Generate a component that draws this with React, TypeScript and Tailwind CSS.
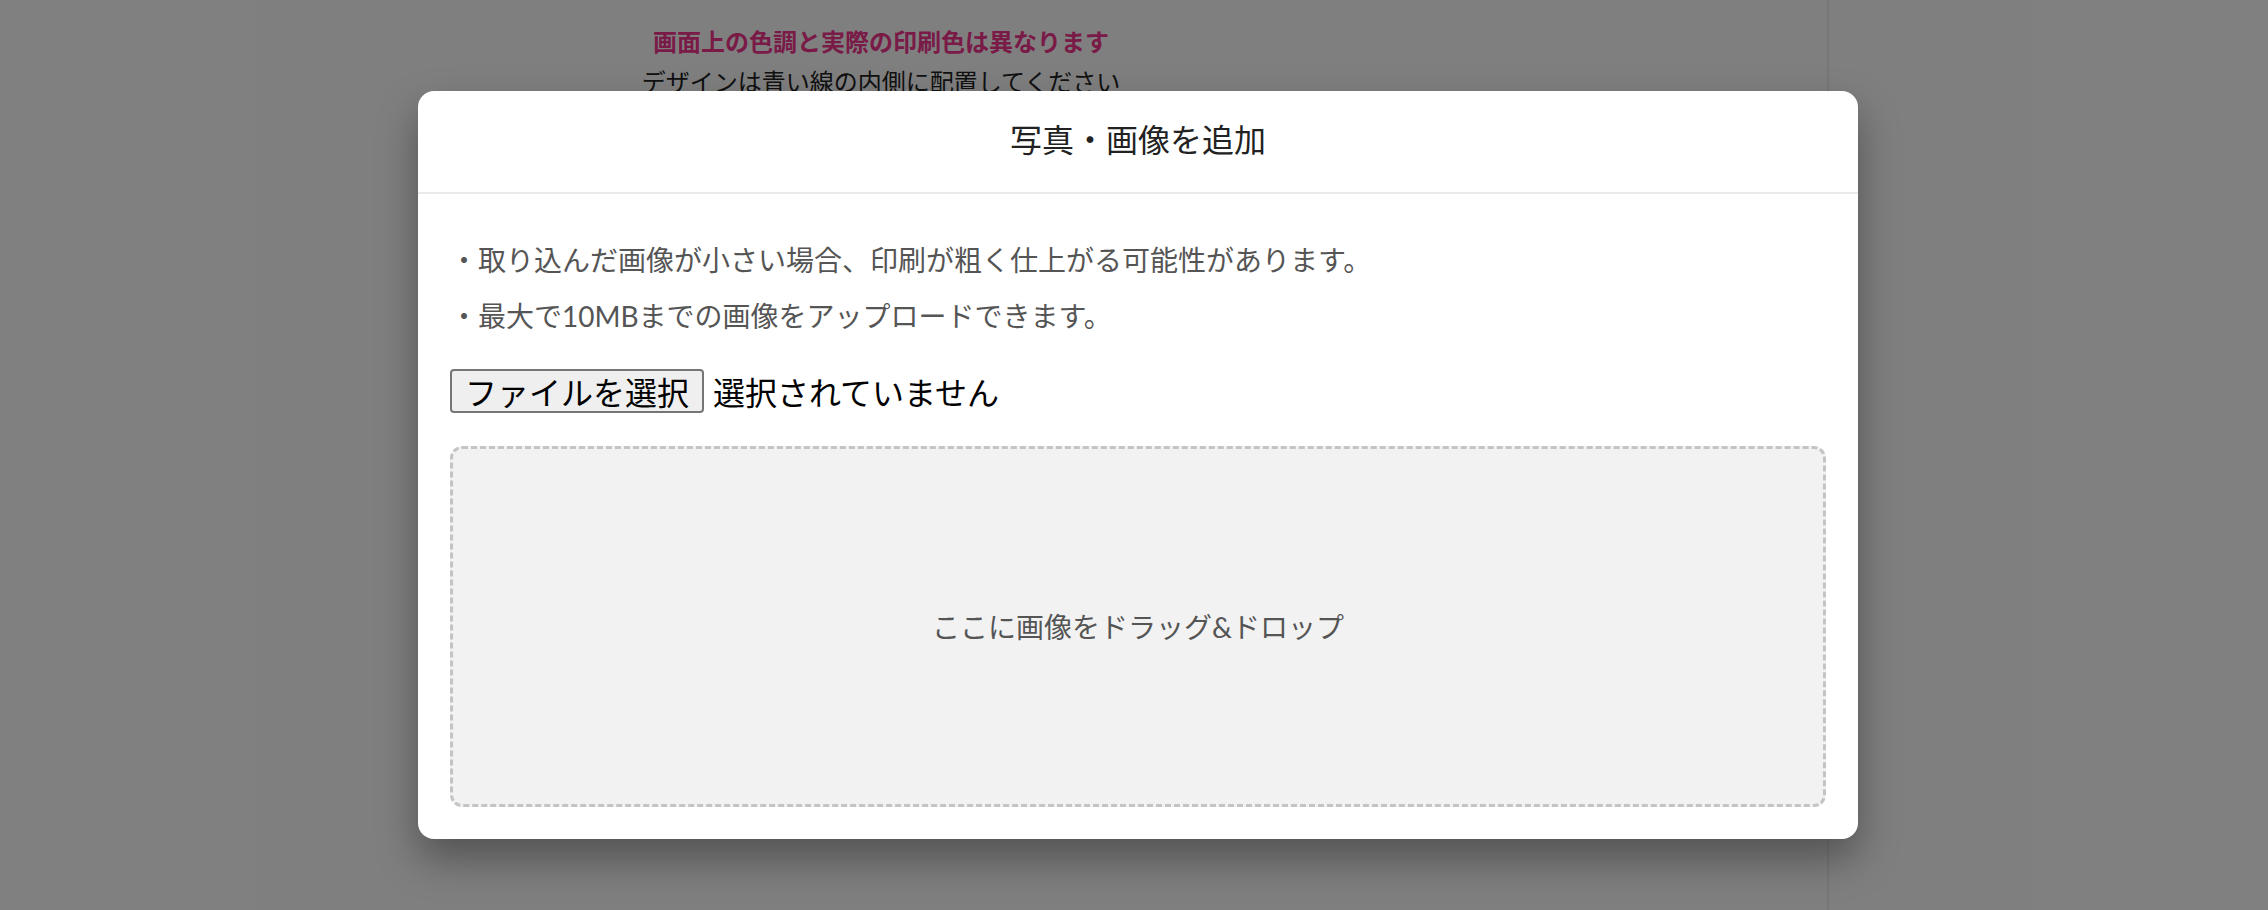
import React from "react";

export default function App() {
  return (
    <div className="relative w-[2268px] h-[910px] overflow-hidden bg-white" style={{ fontFamily: '"Lato", "Noto Sans CJK JP", sans-serif' }}>
      {/* underlying page */}
      <div className="flex h-full">
        <div className="w-[1829px] h-full border-r-2 border-[#eeeeee] pr-[65px] pt-[26px]">
          <div className="flex flex-col items-center">
            <p className="text-[24px] leading-[30px] font-bold text-[#f2358f]" style={{ fontFamily: '"Noto Sans CJK JP", sans-serif' }}>
              画面上の色調と実際の印刷色は異なります
            </p>
            <p className="text-[24px] leading-[30px] text-[#222] mt-[10px]" style={{ fontFamily: '"Noto Sans CJK JP", sans-serif' }}>
              デザインは青い線の内側に配置してください
            </p>
          </div>
        </div>
        <div className="flex-1 h-full" />
      </div>

      {/* overlay */}
      <div className="absolute inset-0 bg-black/50" />

      {/* modal */}
      <div className="absolute left-[418px] top-[91px] w-[1440px] rounded-[16px] bg-white shadow-[0_20px_40px_rgba(0,0,0,0.35)]">
        <div className="h-[103px] border-b-2 border-[#e9e9e9] flex justify-center pt-[31px]">
          <h2 className="text-[32px] leading-none h-[32px] text-[#222]" style={{ fontFamily: '"Noto Sans CJK JP", sans-serif' }}>
            写真・画像を追加
          </h2>
        </div>
        <div className="px-[32px] pt-[38px] pb-[32px]">
          <p className="text-[28px] leading-[56px] text-[#555]">・取り込んだ画像が小さい場合、印刷が粗く仕上がる可能性があります。</p>
          <p className="text-[28px] leading-[56px] text-[#555]">・最大で10MBまでの画像をアップロードできます。</p>
          <div className="flex items-center mt-[25px]" style={{ fontFamily: '"Noto Sans CJK JP", sans-serif' }}>
            <div className="w-[254px] h-[44px] flex items-center justify-center border-2 border-[#767676] bg-[#efefef] rounded-[4px] text-[32px] leading-none text-black">
              ファイルを選択
            </div>
            <span className="ml-[9px] text-[32px] leading-none text-black">選択されていません</span>
          </div>
          <div className="mt-[33px] h-[361px] rounded-[12px] border-[3px] border-dashed border-[#c4c4c4] bg-[#f2f2f2] flex items-center justify-center">
            <span className="text-[28px] text-[#555]">ここに画像をドラッグ&amp;ドロップ</span>
          </div>
        </div>
      </div>
    </div>
  );
}
